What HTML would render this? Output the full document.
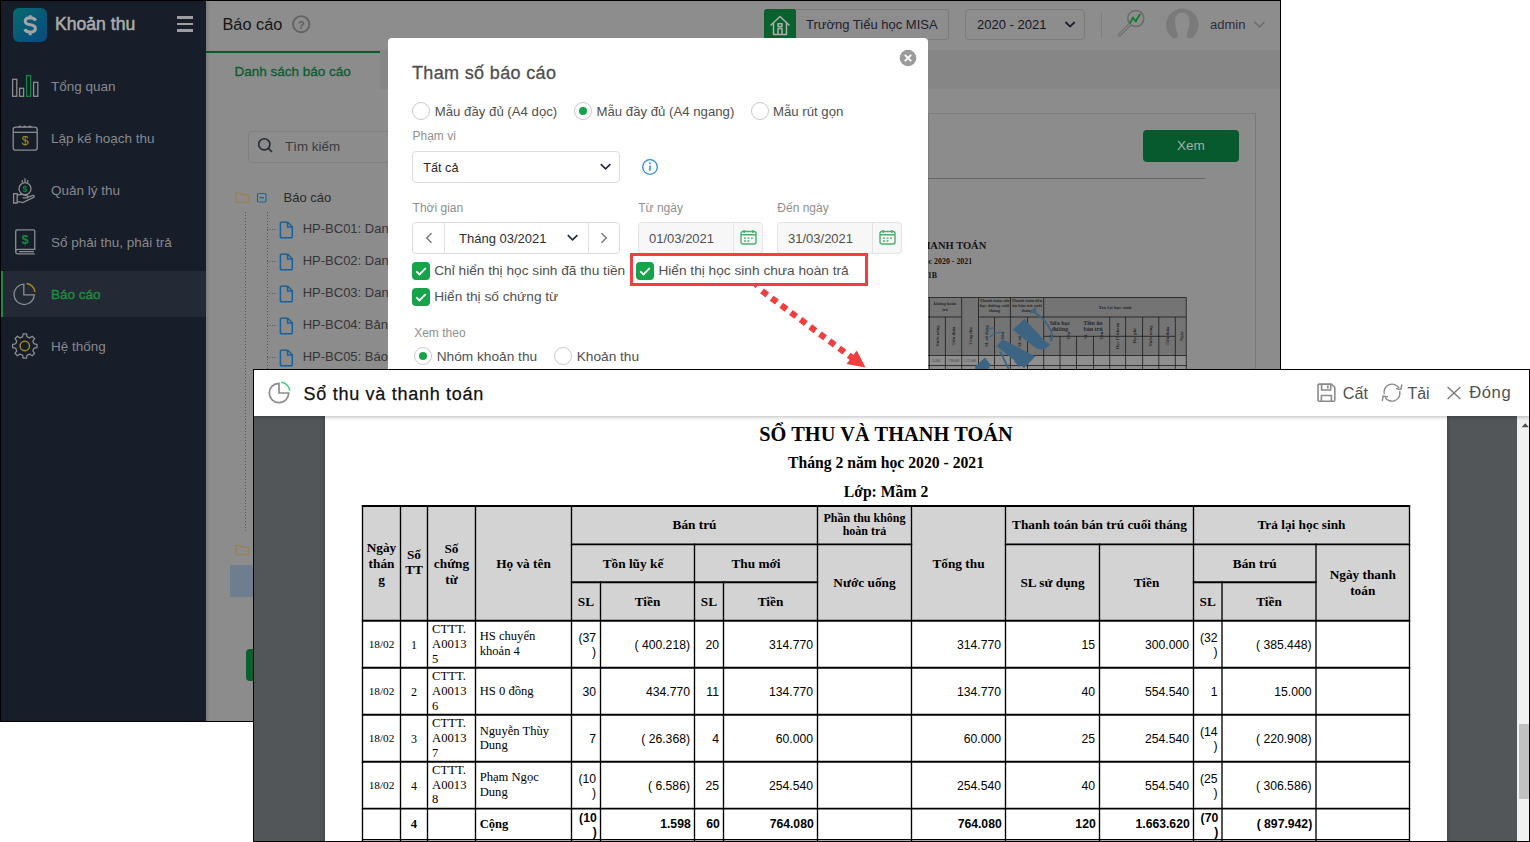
<!DOCTYPE html>
<html><head><meta charset="utf-8">
<style>
*{box-sizing:border-box;margin:0;padding:0}
html,body{width:1530px;height:842px;overflow:hidden;background:#fff;font-family:"Liberation Sans",sans-serif;position:relative}
.a{position:absolute}
.t{position:absolute;white-space:nowrap}
svg{position:absolute;overflow:visible}
</style></head><body>

<div class="a" style="left:0px;top:0px;width:1281px;height:722px;background:#8c8c8c;border:1px solid #000"></div>
<div class="a" style="left:1px;top:1px;width:205px;height:720px;background:#171d29"></div>
<div class="a" style="left:13px;top:8px;width:34px;height:34px;border-radius:6px;background:linear-gradient(135deg,#066d6e 0%,#08567a 60%,#0a4a80 100%)"></div>
<svg style="left:13px;top:8px" width="34" height="34" viewBox="0 0 34 34"><path d="M22.6 12.6c-.7-1.7-2.5-2.8-5.4-2.8c-3 0-5 1.4-5 3.5c0 2.3 2.1 3 5.1 3.5c3.1.5 5.1 1.3 5.1 3.7c0 2.1-2.1 3.5-5.2 3.5c-2.8 0-4.7-1.1-5.4-2.9M17.2 7.2v4.2M17.2 23.2v4" fill="none" stroke="#a6a6a6" stroke-width="3"/></svg>
<div class="t" style="left:55px;top:13.94px;font-size:17.6px;line-height:21.12px;color:#aaaaaa;font-weight:normal;font-family:'Liberation Sans',sans-serif;-webkit-text-stroke:0.55px #aaaaaa;">Khoản thu</div>
<div class="a" style="left:177px;top:15.8px;width:16px;height:2.8px;background:#9e9e9e"></div>
<div class="a" style="left:177px;top:22.6px;width:16px;height:2.8px;background:#9e9e9e"></div>
<div class="a" style="left:177px;top:29.3px;width:16px;height:2.8px;background:#9e9e9e"></div>
<div class="t" style="left:51px;top:78.72px;font-size:13.5px;line-height:16.2px;color:#87898e;font-weight:normal;font-family:'Liberation Sans',sans-serif;">Tổng quan</div>
<div class="t" style="left:51px;top:130.72px;font-size:13.5px;line-height:16.2px;color:#87898e;font-weight:normal;font-family:'Liberation Sans',sans-serif;">Lập kế hoạch thu</div>
<div class="t" style="left:51px;top:182.72px;font-size:13.5px;line-height:16.2px;color:#87898e;font-weight:normal;font-family:'Liberation Sans',sans-serif;">Quản lý thu</div>
<div class="t" style="left:51px;top:234.72px;font-size:13.5px;line-height:16.2px;color:#87898e;font-weight:normal;font-family:'Liberation Sans',sans-serif;">Sổ phải thu, phải trả</div>
<div class="a" style="left:1px;top:271px;width:205px;height:46px;background:#232a36"></div>
<div class="a" style="left:1px;top:271px;width:2px;height:46px;background:#1d8c3f"></div>
<div class="t" style="left:51px;top:286.72px;font-size:13.5px;line-height:16.2px;color:#1e8a3e;font-weight:normal;font-family:'Liberation Sans',sans-serif;-webkit-text-stroke:0.45px #1e8a3e;">Báo cáo</div>
<div class="t" style="left:51px;top:338.72px;font-size:13.5px;line-height:16.2px;color:#87898e;font-weight:normal;font-family:'Liberation Sans',sans-serif;">Hệ thống</div>
<svg style="left:0;top:0" width="60" height="400">
<g fill="none" stroke="#8b8d91" stroke-width="1.3">
<rect x="12.6" y="79.3" width="4.2" height="17"/>
<rect x="19.6" y="88.3" width="4" height="8"/>
<rect x="33.6" y="82.3" width="4.2" height="14"/>
<rect x="13.2" y="127.2" width="24" height="23" rx="2.5"/>
<path d="M13.2 132.3h24"/>
<path d="M18.5 127.5a1.3 1.3 0 1 1 2.6 0M23.5 127.5a1.3 1.3 0 1 1 2.6 0M28.5 127.5a1.3 1.3 0 1 1 2.6 0"/>
<circle cx="25" cy="188.7" r="6"/>
<path d="M25 178.3v3.8M22.3 180v2.6M27.7 180v2.6"/>
<path d="M13.6 193.6h3.6v9.4h-3.6z"/>
<path d="M17.2 195l4.8-.6l5.4 1.4c1.2.3 1 2-.3 2h-4.4"/>
<path d="M17.2 201.3l5.6 1.3l10.8-5.2c1.3-.6.6-2.4-.8-2l-6 2.2"/>
<path d="M17 229.8h16.6c.8 0 1.2.4 1.2 1.2v18.3h-16.8c-1.3 0-2.3 1-2.3 2.3s1 2.3 2.3 2.3h16.8M15.7 251.6v-20.2c0-.8.6-1.4 1.3-1.4"/>
<path d="M19 251.6h15"/>
<path d="M23.8 284.2a10.2 10.2 0 1 0 10.6 10.6h-10.6z"/>
</g>
<rect x="26.6" y="75.6" width="4" height="20.7" fill="none" stroke="#13853d" stroke-width="1.3"/>
<path d="M26.6 283.5a10.6 10.6 0 0 1 8.5 8.4" fill="none" stroke="#a4872a" stroke-width="1.5"/>
<g fill="none" stroke="#a4872a" stroke-width="1.5"><circle cx="24.8" cy="346" r="4.7"/></g>
<path id="gear" d="" fill="none" stroke="#8b8d91" stroke-width="1.3"/>
<text x="25.2" y="145.2" font-size="13" font-family="Liberation Sans" fill="#a4872a" text-anchor="middle">$</text>
<text x="25" y="192" font-size="9" font-family="Liberation Sans" fill="#13853d" text-anchor="middle" font-weight="bold">$</text>
<text x="25" y="243.6" font-size="13" font-family="Liberation Sans" fill="#13853d" text-anchor="middle" font-weight="bold">$</text>
<path d="M34.27 343.88L36.98 344.28L36.98 347.72L34.27 348.12L33.67 348.80L33.39 349.56L33.05 350.29L32.99 351.20L34.63 353.40L32.20 355.83L30.00 354.19L29.09 354.25L28.36 354.59L27.60 354.87L26.92 355.47L26.52 358.18L23.08 358.18L22.68 355.47L22.00 354.87L21.24 354.59L20.51 354.25L19.60 354.19L17.40 355.83L14.97 353.40L16.61 351.20L16.55 350.29L16.21 349.56L15.93 348.80L15.33 348.12L12.62 347.72L12.62 344.28L15.33 343.88L15.93 343.20L16.21 342.44L16.55 341.71L16.61 340.80L14.97 338.60L17.40 336.17L19.60 337.81L20.51 337.75L21.24 337.41L22.00 337.13L22.68 336.53L23.08 333.82L26.52 333.82L26.92 336.53L27.60 337.13L28.36 337.41L29.09 337.75L30.00 337.81L32.20 336.17L34.63 338.60L32.99 340.80L33.05 341.71L33.39 342.44L33.67 343.20Z" fill="none" stroke="#8b8d91" stroke-width="1.3" stroke-linejoin="round"/>
</svg>
<div class="a" style="left:206px;top:1px;width:1074px;height:50px;background:#8d8d8d;border-bottom:1px solid #868686"></div>
<div class="t" style="left:222.5px;top:14.57px;font-size:16.3px;line-height:19.56px;color:#151515;font-weight:normal;font-family:'Liberation Sans',sans-serif;">Báo cáo</div>
<svg style="left:292px;top:15px" width="20" height="20"><circle cx="9.2" cy="9.2" r="8.1" fill="none" stroke="#636363" stroke-width="1.9"/><text x="9.2" y="13.5" font-size="11.5" font-family="Liberation Sans" font-weight="bold" fill="#606060" text-anchor="middle">?</text></svg>
<div class="a" style="left:206px;top:51px;width:1074px;height:38px;background:#868686"></div>
<div class="a" style="left:206px;top:51px;width:174px;height:38px;background:#8c8c8c"></div>
<div class="a" style="left:206px;top:1px;width:4px;height:720px;background:linear-gradient(90deg,rgba(0,0,0,.12),rgba(0,0,0,0))"></div>
<div class="a" style="left:206px;top:50.5px;width:174px;height:2px;background:#0c5a2a"></div>
<div class="t" style="left:234.5px;top:63.52px;font-size:13.5px;line-height:16.2px;color:#0f5c34;font-weight:normal;font-family:'Liberation Sans',sans-serif;-webkit-text-stroke:0.35px #0f5c34;">Danh sách báo cáo</div>
<div class="a" style="left:764px;top:9px;width:32px;height:31px;background:#08612f;border-radius:3px 0 0 3px"></div>
<svg style="left:764px;top:9px" width="32" height="31"><path d="M6.5 16.5L16 7.5l9.5 9M9.5 14v11.5h13V14M14 25.5v-6h4v6M14 14.8h4v2.6h-4z" fill="none" stroke="#a9b0ab" stroke-width="1.5" stroke-linejoin="round"/></svg>
<div class="a" style="left:795px;top:9px;width:154px;height:31px;border:1px solid #7b7b7b;border-left:none;border-radius:0 4px 4px 0"></div>
<div class="t" style="left:806px;top:17.20px;font-size:13px;line-height:15.6px;color:#1f2030;font-weight:normal;font-family:'Liberation Sans',sans-serif;">Trường Tiểu học MISA</div>
<div class="a" style="left:965px;top:9px;width:120px;height:31px;border:1px solid #7b7b7b;border-radius:4px"></div>
<div class="t" style="left:977px;top:17.20px;font-size:13px;line-height:15.6px;color:#161622;font-weight:normal;font-family:'Liberation Sans',sans-serif;">2020 - 2021</div>
<svg style="left:1064px;top:20px" width="14" height="10"><path d="M1.5 2l4.6 4.6l4.6-4.6" fill="none" stroke="#1c1f33" stroke-width="1.8"/></svg>
<div class="a" style="left:1101px;top:12px;width:1px;height:26px;background:#7e7e7e"></div>
<svg style="left:1116px;top:8px" width="32" height="30">
<circle cx="19.8" cy="10.5" r="8" fill="none" stroke="#6a6a6a" stroke-width="1.5"/>
<path d="M14 16.5l-10.5 10.3" stroke="#6a6a6a" stroke-width="3.2" stroke-linecap="round"/>
<path d="M14 16.5l-10.5 10.3" stroke="#8c8c8c" stroke-width="1.2" stroke-linecap="round"/>
<path d="M13.8 15.2L17 10L19.8 13L24.2 6" fill="none" stroke="#137a36" stroke-width="1.8"/><circle cx="17" cy="10" r="1.2" fill="#137a36"/><circle cx="19.8" cy="13" r="1.2" fill="#137a36"/>
</svg>
<svg style="left:0;top:0" width="1280" height="50"><path d="M1172 37.5A16.3 16.3 0 1 1 1192.6 37.5A3.6 3.6 0 0 1 1186.6 34.6C1188.6 30 1189.5 26 1189.5 21C1189.5 15.5 1186.5 12.5 1182.3 12.5C1178 12.5 1175 15.5 1175 21C1175 26 1176 30 1178 34.6A3.6 3.6 0 0 1 1172 37.5Z" fill="#7a7a7a"/></svg>
<div class="t" style="left:1210px;top:16.50px;font-size:13px;line-height:15.6px;color:#2c2e3c;font-weight:normal;font-family:'Liberation Sans',sans-serif;">admin</div>
<svg style="left:1253px;top:20px" width="14" height="10"><path d="M1.5 2l5 5l5-5" fill="none" stroke="#666" stroke-width="1.2"/></svg>
<div class="a" style="left:248px;top:131px;width:160px;height:32px;border:1px solid #808080;border-radius:4px"></div>
<svg style="left:257px;top:137px" width="18" height="18"><circle cx="7.3" cy="7.3" r="5.6" fill="none" stroke="#262a35" stroke-width="1.6"/><path d="M11.4 11.4l3.6 3.6" stroke="#262a35" stroke-width="1.7"/></svg>
<div class="t" style="left:285px;top:138.82px;font-size:13.4px;line-height:16.08px;color:#3b3a40;font-weight:normal;font-family:'Liberation Sans',sans-serif;">Tìm kiếm</div>
<svg style="left:230px;top:185px" width="160" height="550">
<path d="M6 8h4.5l1.5 1.7h6c.5 0 .8.3.8.8v6.7h-12.8z" fill="none" stroke="#9c7f45" stroke-width="1.1"/>
<rect x="27.5" y="8.5" width="8.5" height="8.5" rx="1" fill="none" stroke="#1d64a0" stroke-width="1.1"/>
<path d="M29.5 12.75h4.5" stroke="#1c68a0" stroke-width="1.3"/>
<path d="M15.5 27v320M37.5 27v320" stroke="#555" stroke-width="1" stroke-dasharray="1 2"/>
<path d="M6 360.5h4.5l1.5 1.7h6c.5 0 .8.3.8.8v6.7h-12.8z" fill="none" stroke="#9c7f45" stroke-width="1.1"/>
</svg>
<div class="t" style="left:283.5px;top:190.00px;font-size:13px;line-height:15.6px;color:#2a2a2a;font-weight:normal;font-family:'Liberation Sans',sans-serif;">Báo cáo</div>
<svg style="left:236px;top:219px" width="60" height="20"><path d="M31 10.5h10" stroke="#555" stroke-width="1" stroke-dasharray="1 1.5"/><path d="M45.3 3.2h6.5l4.5 4.5v10.2c0 .5-.4.9-.9.9h-10.1c-.5 0-.9-.4-.9-.9v-13.8c0-.5.4-.9.9-.9zM51.5 3.2v4.8h4.8" fill="none" stroke="#1a6199" stroke-width="1.5"/></svg>
<div class="t" style="left:302.7px;top:221.40px;font-size:13px;line-height:15.6px;color:#353535;font-weight:normal;font-family:'Liberation Sans',sans-serif;">HP-BC01: Danh sách</div>
<svg style="left:236px;top:251px" width="60" height="20"><path d="M31 10.5h10" stroke="#555" stroke-width="1" stroke-dasharray="1 1.5"/><path d="M45.3 3.2h6.5l4.5 4.5v10.2c0 .5-.4.9-.9.9h-10.1c-.5 0-.9-.4-.9-.9v-13.8c0-.5.4-.9.9-.9zM51.5 3.2v4.8h4.8" fill="none" stroke="#1a6199" stroke-width="1.5"/></svg>
<div class="t" style="left:302.7px;top:253.40px;font-size:13px;line-height:15.6px;color:#353535;font-weight:normal;font-family:'Liberation Sans',sans-serif;">HP-BC02: Danh sách</div>
<svg style="left:236px;top:283px" width="60" height="20"><path d="M31 10.5h10" stroke="#555" stroke-width="1" stroke-dasharray="1 1.5"/><path d="M45.3 3.2h6.5l4.5 4.5v10.2c0 .5-.4.9-.9.9h-10.1c-.5 0-.9-.4-.9-.9v-13.8c0-.5.4-.9.9-.9zM51.5 3.2v4.8h4.8" fill="none" stroke="#1a6199" stroke-width="1.5"/></svg>
<div class="t" style="left:302.7px;top:285.40px;font-size:13px;line-height:15.6px;color:#353535;font-weight:normal;font-family:'Liberation Sans',sans-serif;">HP-BC03: Danh sách</div>
<svg style="left:236px;top:315px" width="60" height="20"><path d="M31 10.5h10" stroke="#555" stroke-width="1" stroke-dasharray="1 1.5"/><path d="M45.3 3.2h6.5l4.5 4.5v10.2c0 .5-.4.9-.9.9h-10.1c-.5 0-.9-.4-.9-.9v-13.8c0-.5.4-.9.9-.9zM51.5 3.2v4.8h4.8" fill="none" stroke="#1a6199" stroke-width="1.5"/></svg>
<div class="t" style="left:302.7px;top:317.40px;font-size:13px;line-height:15.6px;color:#353535;font-weight:normal;font-family:'Liberation Sans',sans-serif;">HP-BC04: Bảng kê</div>
<svg style="left:236px;top:347px" width="60" height="20"><path d="M31 10.5h10" stroke="#555" stroke-width="1" stroke-dasharray="1 1.5"/><path d="M45.3 3.2h6.5l4.5 4.5v10.2c0 .5-.4.9-.9.9h-10.1c-.5 0-.9-.4-.9-.9v-13.8c0-.5.4-.9.9-.9zM51.5 3.2v4.8h4.8" fill="none" stroke="#1a6199" stroke-width="1.5"/></svg>
<div class="t" style="left:302.7px;top:349.40px;font-size:13px;line-height:15.6px;color:#353535;font-weight:normal;font-family:'Liberation Sans',sans-serif;">HP-BC05: Báo cáo</div>
<div class="a" style="left:230px;top:565px;width:30px;height:32px;background:#6e7e8e"></div>
<div class="a" style="left:246px;top:649px;width:14px;height:32px;background:#08612f;border-radius:4px"></div>
<div class="a" style="left:928px;top:113px;width:328px;height:620px;border:1px solid #7d7d7d;border-right:1px solid #7a7a7a"></div>
<div class="a" style="left:1143px;top:130px;width:96px;height:32px;background:#075a2d;border-radius:4px"></div>
<div class="t" style="left:1143px;top:138.22px;font-size:13.5px;line-height:16.2px;color:#a3aea6;font-weight:normal;font-family:'Liberation Sans',sans-serif;width:96px;text-align:center;">Xem</div>
<div class="a" style="left:928px;top:177.5px;width:277px;height:1.3px;background:#676767"></div>
<div class="t" style="left:800px;top:240.2px;width:186.3px;text-align:right;font:bold 10.5px/12px 'Liberation Serif',serif;color:#141414">SỔ THU VÀ THANH TOÁN</div>
<div class="t" style="left:800px;top:257.2px;width:172.2px;text-align:right;font:bold 7.9px/9px 'Liberation Serif',serif;color:#141414">Tháng 2 năm học 2020 - 2021</div>
<div class="t" style="left:800px;top:270.7px;width:137px;text-align:right;font:bold 7.9px/9px 'Liberation Serif',serif;color:#141414">Lớp: Mầm 1B</div>
<svg style="left:900px;top:290px" width="300" height="90" viewBox="900 290 300 90"><rect x="920" y="297.5" width="266" height="58" fill="#747474"/><rect x="920" y="355.5" width="266" height="14" fill="#8e8e8e"/><g stroke="#1a1a1a" stroke-width="0.8" fill="none"><path d="M920 297.5H1186.3M920 355.5H1186.3M920 365.5H1186.3M920 317H961.7M978.5 317H1186.3M1043.7 336.3H1175"/><path d="M929.4 297.5V370"/><path d="M961.7 297.5V370"/><path d="M978.5 297.5V370"/><path d="M1010.4 297.5V370"/><path d="M1043.7 297.5V370"/><path d="M1186.3 297.5V370"/><path d="M945.4 317V370"/><path d="M994.5 317V370"/><path d="M1027.5 317V370"/><path d="M1060 336.3V370"/><path d="M1076.5 336.3V370"/><path d="M1093.5 336.3V370"/><path d="M1109.7 317V370"/><path d="M1125.6 317V370"/><path d="M1142.6 317V370"/><path d="M1158.8 317V370"/><path d="M1175.3 317V370"/></g><g fill="#2a2a2a" font-family="Liberation Serif" font-weight="bold" font-size="4.5" text-anchor="middle"><text x="945" y="305">không hoàn</text><text x="945" y="311">trả</text><text x="994.5" y="302">Thanh toán sữa</text><text x="994.5" y="307">học đường cuối</text><text x="994.5" y="312">tháng</text><text x="1027" y="302">Thanh toán tiền</text><text x="1027" y="307">ăn bán trú cuối</text><text x="1027" y="312">tháng</text><text x="1115" y="309" font-size="5">Trả lại học sinh</text><text x="1060" y="325" font-size="6">Sữa học</text><text x="1060" y="331" font-size="6">đường</text><text x="1093" y="325" font-size="6">Tiền ăn</text><text x="1093" y="331" font-size="6">bán trú</text></g><g fill="#2a2a2a" font-family="Liberation Serif" font-weight="bold" font-size="4.5" text-anchor="middle"><text transform="translate(939.0 336) rotate(-90)">Nước uống</text><text transform="translate(955.0 336) rotate(-90)">Tiền thừa</text><text transform="translate(971.5 336) rotate(-90)">Tổng thu</text><text transform="translate(988.0 336) rotate(-90)">SL sử dụng</text><text transform="translate(1004.0 336) rotate(-90)">Tiền</text><text transform="translate(1020.5 336) rotate(-90)">SL sử dụng</text><text transform="translate(1037.0 336) rotate(-90)">Tiền</text><text transform="translate(1053.0 336) rotate(-90)">SL</text><text transform="translate(1069.5 336) rotate(-90)">Tiền</text><text transform="translate(1086.5 336) rotate(-90)">SL</text><text transform="translate(1103.0 336) rotate(-90)">Tiền</text><text transform="translate(1119.0 336) rotate(-90)">Học 15 khoản</text><text transform="translate(1135.5 336) rotate(-90)">Học phí</text><text transform="translate(1152.0 336) rotate(-90)">Nước uống</text><text transform="translate(1168.5 336) rotate(-90)">Tiền thừa</text><text transform="translate(1182.5 336) rotate(-90)">Ngày</text></g><g fill="#3a3a3a" font-size="3" font-family="Liberation Serif"><text x="932" y="362">55.000</text><text x="948" y="362">1700.000</text><text x="964" y="362">1.175.000</text></g><g fill="#3e6483"><path d="M1012.5 329.9L1024.9 318.5L1026.3 321.3L1045.8 341.8C1047.5 343 1049 343.6 1050.5 344.1C1048 347.5 1045 349.4 1042 349.4C1039 349.4 1036.5 348.5 1034.4 347L1014 330.8Z"/><path d="M996.4 346L1003 339.4L1035.3 356.5L1024 367.9Z"/><path d="M1014 361l4-3l5 5l-4 4z"/><path d="M975.5 366L985 357.4L990.7 365L988 370L975 370Z"/></g><path d="M1000.2 351.7L1008.7 369" stroke="#3e6483" stroke-width="1.8"/><path d="M1032 311C1039 315 1045 320 1049 327C1052.5 333 1053.5 337 1050.5 341.3" fill="none" stroke="#3e6483" stroke-width="1.8"/><path d="M1029.5 312.8l6.3-6.2l.8 6.5z" fill="#3e6483"/><path d="M985.9 331C988 329 991 328.5 994.5 327.5M989.7 337.5C992 334 996 332 1004 331.8" fill="none" stroke="#3e6483" stroke-width="1.3"/></svg>
<div class="a" style="left:388px;top:38px;width:540px;height:340px;background:#fff;border-radius:4px"></div>
<svg style="left:899px;top:49px" width="18" height="18"><circle cx="9" cy="9" r="8.3" fill="#9b9b9b"/><path d="M5.8 5.8l6.4 6.4M12.2 5.8l-6.4 6.4" stroke="#fff" stroke-width="1.9"/></svg>
<div class="t" style="left:412px;top:62.86px;font-size:18px;line-height:21.6px;color:#4f4f4f;font-weight:normal;font-family:'Liberation Sans',sans-serif;letter-spacing:0.35px;-webkit-text-stroke:0.3px #4f4f4f;">Tham số báo cáo</div>
<div class="a" style="left:412px;top:102px;width:18px;height:18px;border:1px solid #c9c9c9;border-radius:50%;background:#fff"></div>
<div class="t" style="left:434.8px;top:103.71px;font-size:13.2px;line-height:15.84px;color:#505050;font-weight:normal;font-family:'Liberation Sans',sans-serif;">Mẫu đầy đủ (A4 dọc)</div>
<div class="a" style="left:574px;top:102px;width:18px;height:18px;border:1px solid #c9c9c9;border-radius:50%;background:#fff"></div>
<div class="a" style="left:578.8px;top:106.8px;width:8.4px;height:8.4px;border-radius:50%;background:#17a34a"></div>
<div class="t" style="left:596.5px;top:103.71px;font-size:13.2px;line-height:15.84px;color:#505050;font-weight:normal;font-family:'Liberation Sans',sans-serif;">Mẫu đầy đủ (A4 ngang)</div>
<div class="a" style="left:751px;top:102px;width:18px;height:18px;border:1px solid #c9c9c9;border-radius:50%;background:#fff"></div>
<div class="t" style="left:773px;top:103.71px;font-size:13.2px;line-height:15.84px;color:#505050;font-weight:normal;font-family:'Liberation Sans',sans-serif;">Mẫu rút gọn</div>
<div class="t" style="left:412.5px;top:129.44px;font-size:12px;line-height:14.4px;color:#8f8f8f;font-weight:normal;font-family:'Liberation Sans',sans-serif;">Phạm vi</div>
<div class="a" style="left:412px;top:151px;width:208px;height:32px;border:1px solid #dcdcdc;border-radius:4px"></div>
<div class="t" style="left:423.2px;top:160.58px;font-size:12.7px;line-height:15.24px;color:#262626;font-weight:normal;font-family:'Liberation Sans',sans-serif;">Tất cả</div>
<svg style="left:599px;top:162px" width="14" height="10"><path d="M1.8 2.2l4.8 4.6l4.8-4.6" fill="none" stroke="#242943" stroke-width="1.7"/></svg>
<svg style="left:641px;top:158px" width="18" height="18"><circle cx="9" cy="9" r="7.3" fill="none" stroke="#2d8ad8" stroke-width="1.3"/><path d="M9 7.6v5.2" stroke="#2d8ad8" stroke-width="1.5"/><circle cx="9" cy="5.3" r=".95" fill="#2d8ad8"/></svg>
<div class="t" style="left:412.6px;top:201.44px;font-size:12px;line-height:14.4px;color:#8f8f8f;font-weight:normal;font-family:'Liberation Sans',sans-serif;">Thời gian</div>
<div class="t" style="left:638.2px;top:201.44px;font-size:12px;line-height:14.4px;color:#8f8f8f;font-weight:normal;font-family:'Liberation Sans',sans-serif;">Từ ngày</div>
<div class="t" style="left:777.3px;top:201.44px;font-size:12px;line-height:14.4px;color:#8f8f8f;font-weight:normal;font-family:'Liberation Sans',sans-serif;">Đến ngày</div>
<div class="a" style="left:412px;top:222px;width:208px;height:32px;border:1px solid #dcdcdc;border-radius:4px"></div>
<div class="a" style="left:444px;top:223px;width:1px;height:30px;background:#e2e2e2"></div>
<div class="a" style="left:587.5px;top:223px;width:1px;height:30px;background:#e2e2e2"></div>
<svg style="left:422px;top:230px" width="14" height="16"><path d="M9.5 3.2l-4.8 4.8l4.8 4.8" fill="none" stroke="#777" stroke-width="1.4"/></svg>
<svg style="left:597px;top:230px" width="14" height="16"><path d="M4.5 3.2l4.8 4.8l-4.8 4.8" fill="none" stroke="#777" stroke-width="1.4"/></svg>
<div class="t" style="left:459px;top:230.60px;font-size:13px;line-height:15.6px;color:#2e2e2e;font-weight:normal;font-family:'Liberation Sans',sans-serif;">Tháng 03/2021</div>
<svg style="left:566px;top:233px" width="14" height="10"><path d="M1.8 2.2l4.8 4.6l4.8-4.6" fill="none" stroke="#242943" stroke-width="1.7"/></svg>
<div class="a" style="left:638px;top:222px;width:125px;height:32px;border:1px solid #e3e3e3;border-radius:4px;background:#f7f7f7"></div>
<div class="a" style="left:732.5px;top:223px;width:1px;height:30px;background:#e3e3e3"></div>
<div class="t" style="left:649px;top:230.60px;font-size:13px;line-height:15.6px;color:#505050;font-weight:normal;font-family:'Liberation Sans',sans-serif;">01/03/2021</div>
<svg style="left:739.5px;top:230px" width="18" height="16"><rect x="1" y="1.5" width="15" height="12.5" rx="2" fill="none" stroke="#47b06e" stroke-width="1.4"/><path d="M1 4.8h15M4.2 0v3M12.8 0v3" stroke="#47b06e" stroke-width="1.4"/><path d="M4 8.2h2M7.5 8.2h2M11 8.2h2M4 11h2M7.5 11h2" stroke="#47b06e" stroke-width="1.3"/></svg>
<div class="a" style="left:777px;top:222px;width:125px;height:32px;border:1px solid #e3e3e3;border-radius:4px;background:#f7f7f7"></div>
<div class="a" style="left:871.5px;top:223px;width:1px;height:30px;background:#e3e3e3"></div>
<div class="t" style="left:788px;top:230.60px;font-size:13px;line-height:15.6px;color:#505050;font-weight:normal;font-family:'Liberation Sans',sans-serif;">31/03/2021</div>
<svg style="left:878.5px;top:230px" width="18" height="16"><rect x="1" y="1.5" width="15" height="12.5" rx="2" fill="none" stroke="#47b06e" stroke-width="1.4"/><path d="M1 4.8h15M4.2 0v3M12.8 0v3" stroke="#47b06e" stroke-width="1.4"/><path d="M4 8.2h2M7.5 8.2h2M11 8.2h2M4 11h2M7.5 11h2" stroke="#47b06e" stroke-width="1.3"/></svg>
<div class="a" style="left:412px;top:262px;width:18px;height:18px;border-radius:4px;background:#17a34a"></div>
<svg style="left:412px;top:262px" width="18" height="18"><path d="M4.3 9.3l3.2 3.1l6.2-6.2" fill="none" stroke="#fff" stroke-width="1.8"/></svg>
<div class="t" style="left:434.2px;top:263.43px;font-size:13.7px;line-height:16.44px;color:#505050;font-weight:normal;font-family:'Liberation Sans',sans-serif;">Chỉ hiển thị học sinh đã thu tiền</div>
<div class="a" style="left:636.4px;top:262px;width:18px;height:18px;border-radius:4px;background:#17a34a"></div>
<svg style="left:636.4px;top:262px" width="18" height="18"><path d="M4.3 9.3l3.2 3.1l6.2-6.2" fill="none" stroke="#fff" stroke-width="1.8"/></svg>
<div class="t" style="left:658.4px;top:263.43px;font-size:13.7px;line-height:16.44px;color:#505050;font-weight:normal;font-family:'Liberation Sans',sans-serif;">Hiển thị học sinh chưa hoàn trả</div>
<div class="a" style="left:412px;top:288px;width:18px;height:18px;border-radius:4px;background:#17a34a"></div>
<svg style="left:412px;top:288px" width="18" height="18"><path d="M4.3 9.3l3.2 3.1l6.2-6.2" fill="none" stroke="#fff" stroke-width="1.8"/></svg>
<div class="t" style="left:434.2px;top:289.43px;font-size:13.7px;line-height:16.44px;color:#505050;font-weight:normal;font-family:'Liberation Sans',sans-serif;">Hiển thị số chứng từ</div>
<div class="t" style="left:414.2px;top:325.64px;font-size:12px;line-height:14.4px;color:#8f8f8f;font-weight:normal;font-family:'Liberation Sans',sans-serif;">Xem theo</div>
<div class="a" style="left:414px;top:347px;width:18px;height:18px;border:1px solid #c9c9c9;border-radius:50%;background:#fff"></div>
<div class="a" style="left:418.8px;top:351.8px;width:8.4px;height:8.4px;border-radius:50%;background:#17a34a"></div>
<div class="t" style="left:436.7px;top:348.83px;font-size:13.7px;line-height:16.44px;color:#505050;font-weight:normal;font-family:'Liberation Sans',sans-serif;">Nhóm khoản thu</div>
<div class="a" style="left:554px;top:347px;width:18px;height:18px;border:1px solid #c9c9c9;border-radius:50%;background:#fff"></div>
<div class="t" style="left:576.7px;top:348.83px;font-size:13.7px;line-height:16.44px;color:#505050;font-weight:normal;font-family:'Liberation Sans',sans-serif;">Khoản thu</div>
<div class="a" style="left:630px;top:253px;width:238px;height:33px;border:3px solid #f23e3e"></div>
<svg style="left:0;top:0" width="1530" height="842">
<path d="M752.5 285l3 3.2l3-3.2z" fill="#f23e3e"/>
<line x1="762" y1="291" x2="853" y2="358.5" stroke="#f23e3e" stroke-width="6.2" stroke-dasharray="6.6 5.4"/>
<path d="M865.5 367.5L846.5 364L856.8 350.5Z" fill="#f23e3e"/>
</svg>
<div class="a" style="left:253px;top:369px;width:1277px;height:473px;border:1px solid #000;background:#525659;overflow:hidden;z-index:5">
<div class="a" style="left:-254px;top:-370px;width:1530px;height:842px">
<div class="a" style="left:325px;top:410px;width:1122px;height:440px;background:#fff;box-shadow:0 0 4px rgba(0,0,0,.35)"></div>
<div class="a" style="left:1517px;top:416px;width:13px;height:430px;background:#f1f1f1"></div>
<svg style="left:1517px;top:416px" width="13" height="14"><path d="M4.5 11.3L8.3 7.2L12.1 11.3Z" fill="#505050"/></svg>
<div class="a" style="left:1519px;top:724px;width:10px;height:75px;background:#c1c1c1"></div>
<div class="a" style="left:254px;top:370px;width:1276px;height:46px;background:#fff;box-shadow:0 1px 4px rgba(0,0,0,.28)"></div>
<svg style="left:266px;top:380px" width="26" height="26"><path d="M13 3.3A9.7 9.7 0 1 0 22.7 13H13Z" fill="none" stroke="#8c8c8c" stroke-width="1.7"/><path d="M15.2 2.2A10 10 0 0 1 23.8 10.7" fill="none" stroke="#2ecc71" stroke-width="1.6"/></svg>
<div class="t" style="left:303.5px;top:383.56px;font-size:18px;line-height:21.6px;color:#101010;font-weight:normal;font-family:'Liberation Sans',sans-serif;letter-spacing:0.72px;-webkit-text-stroke:0.25px #101010;">Sổ thu và thanh toán</div>
<svg style="left:0;top:0" width="1530" height="842"><g fill="none" stroke="#8a8a8a" stroke-width="1.6"><path d="M1319.2 384.1H1331.4L1334.8 387.5V399.9C1334.8 400.6 1334.3 401.2 1333.6 401.2H1319.2C1318.5 401.2 1318 400.6 1318 399.9V385.3C1318 384.6 1318.5 384.1 1319.2 384.1Z"/><path d="M1321.6 384.3V390H1330.7V384.3M1327.8 385.6V388.5M1321.4 401V395.5H1331.4V401"/></g><g fill="none" stroke="#888" stroke-width="1.4"><path d="M1384.3 394.2A8 8 0 0 1 1399 388.2M1399.7 391.2A8 8 0 0 1 1385.1 397.3"/><path d="M1401.8 384.5L1400.9 389.4L1396 388.6M1382.3 401L1383.1 396.1L1388 396.9"/></g><path d="M1447.6 387.1L1460.4 398.9M1460.4 387.1L1447.6 398.9" stroke="#777" stroke-width="1.35"/></svg>
<div class="t" style="left:1342.7px;top:383.77px;font-size:16.2px;line-height:19.44px;color:#505050;font-weight:normal;font-family:'Liberation Sans',sans-serif;">Cất</div>
<div class="t" style="left:1407.4px;top:383.96px;font-size:16px;line-height:19.2px;color:#505050;font-weight:normal;font-family:'Liberation Sans',sans-serif;">Tải</div>
<div class="t" style="left:1469.2px;top:383.39px;font-size:16.6px;line-height:19.92px;color:#505050;font-weight:normal;font-family:'Liberation Sans',sans-serif;letter-spacing:0.6px;">Đóng</div>
<div class="t" style="left:325px;top:422.37px;font-size:20.3px;line-height:24.36px;color:#000;font-weight:bold;font-family:'Liberation Serif',serif;width:1122px;text-align:center;letter-spacing:0.1px;">SỔ THU VÀ THANH TOÁN</div>
<div class="t" style="left:325px;top:454.28px;font-size:15.7px;line-height:18.84px;color:#000;font-weight:bold;font-family:'Liberation Serif',serif;width:1122px;text-align:center;">Tháng 2 năm học 2020 - 2021</div>
<div class="t" style="left:325px;top:482.68px;font-size:15.7px;line-height:18.84px;color:#000;font-weight:bold;font-family:'Liberation Serif',serif;width:1122px;text-align:center;">Lớp: Mầm 2</div>
<div class="a" style="left:362.5px;top:506px;width:1047.0px;height:114.70000000000005px;background:#d3d3d3"></div>
<div class="a" style="left:362.5px;top:506.5px;width:38.0px;height:114.70000000000005px;display:flex;align-items:center;justify-content:center;text-align:center;font-family:'Liberation Serif',serif;font-weight:bold;font-size:13.3px;line-height:16px;padding-left:0px;padding-right:0px;color:#000;"><div>Ngày<br>thán<br>g</div></div>
<div class="a" style="left:400.5px;top:505.6px;width:27.0px;height:114.70000000000005px;display:flex;align-items:center;justify-content:center;text-align:center;font-family:'Liberation Serif',serif;font-weight:bold;font-size:13.3px;line-height:14.8px;padding-left:0px;padding-right:0px;color:#000;"><div>Số<br>TT</div></div>
<div class="a" style="left:427.5px;top:506.5px;width:48.0px;height:114.70000000000005px;display:flex;align-items:center;justify-content:center;text-align:center;font-family:'Liberation Serif',serif;font-weight:bold;font-size:13.3px;line-height:15.4px;padding-left:0px;padding-right:0px;color:#000;"><div>Số<br>chứng<br>từ</div></div>
<div class="a" style="left:475.5px;top:506.5px;width:96.0px;height:114.70000000000005px;display:flex;align-items:center;justify-content:center;text-align:center;font-family:'Liberation Serif',serif;font-weight:bold;font-size:13.3px;line-height:16px;padding-left:0px;padding-right:0px;color:#000;"><div>Họ và tên</div></div>
<div class="a" style="left:571.5px;top:506px;width:246.0px;height:38.39999999999998px;display:flex;align-items:center;justify-content:center;text-align:center;font-family:'Liberation Serif',serif;font-weight:bold;font-size:13.3px;line-height:16px;padding-left:0px;padding-right:0px;color:#000;"><div>Bán trú</div></div>
<div class="a" style="left:817.5px;top:506px;width:94.0px;height:38.39999999999998px;display:flex;align-items:center;justify-content:center;text-align:center;font-family:'Liberation Serif',serif;font-weight:bold;font-size:12px;line-height:13px;padding-left:0px;padding-right:0px;color:#000;"><div>Phần thu không<br>hoàn trả</div></div>
<div class="a" style="left:911.5px;top:506.5px;width:94.0px;height:114.70000000000005px;display:flex;align-items:center;justify-content:center;text-align:center;font-family:'Liberation Serif',serif;font-weight:bold;font-size:13.3px;line-height:16px;padding-left:0px;padding-right:0px;color:#000;"><div>Tổng thu</div></div>
<div class="a" style="left:1005.5px;top:506px;width:188.0px;height:38.39999999999998px;display:flex;align-items:center;justify-content:center;text-align:center;font-family:'Liberation Serif',serif;font-weight:bold;font-size:13.3px;line-height:16px;padding-left:0px;padding-right:0px;color:#000;"><div>Thanh toán bán trú cuối tháng</div></div>
<div class="a" style="left:1193.5px;top:506px;width:216.0px;height:38.39999999999998px;display:flex;align-items:center;justify-content:center;text-align:center;font-family:'Liberation Serif',serif;font-weight:bold;font-size:13.3px;line-height:16px;padding-left:0px;padding-right:0px;color:#000;"><div>Trả lại học sinh</div></div>
<div class="a" style="left:571.5px;top:545.4px;width:123.0px;height:37.89999999999998px;display:flex;align-items:center;justify-content:center;text-align:center;font-family:'Liberation Serif',serif;font-weight:bold;font-size:13.3px;line-height:16px;padding-left:0px;padding-right:0px;color:#000;"><div>Tồn lũy kế</div></div>
<div class="a" style="left:694.5px;top:545.4px;width:123.0px;height:37.89999999999998px;display:flex;align-items:center;justify-content:center;text-align:center;font-family:'Liberation Serif',serif;font-weight:bold;font-size:13.3px;line-height:16px;padding-left:0px;padding-right:0px;color:#000;"><div>Thu mới</div></div>
<div class="a" style="left:817.5px;top:544.6px;width:94.0px;height:76.30000000000007px;display:flex;align-items:center;justify-content:center;text-align:center;font-family:'Liberation Serif',serif;font-weight:bold;font-size:13.3px;line-height:16px;padding-left:0px;padding-right:0px;color:#000;"><div>Nước uống</div></div>
<div class="a" style="left:1005.5px;top:544.6px;width:94.0px;height:76.30000000000007px;display:flex;align-items:center;justify-content:center;text-align:center;font-family:'Liberation Serif',serif;font-weight:bold;font-size:13.3px;line-height:16px;padding-left:0px;padding-right:0px;color:#000;"><div>SL sử dụng</div></div>
<div class="a" style="left:1099.5px;top:544.6px;width:94.0px;height:76.30000000000007px;display:flex;align-items:center;justify-content:center;text-align:center;font-family:'Liberation Serif',serif;font-weight:bold;font-size:13.3px;line-height:16px;padding-left:0px;padding-right:0px;color:#000;"><div>Tiền</div></div>
<div class="a" style="left:1193.5px;top:545.4px;width:122.5px;height:37.89999999999998px;display:flex;align-items:center;justify-content:center;text-align:center;font-family:'Liberation Serif',serif;font-weight:bold;font-size:13.3px;line-height:16px;padding-left:0px;padding-right:0px;color:#000;"><div>Bán trú</div></div>
<div class="a" style="left:1316px;top:544.6px;width:93.5px;height:76.30000000000007px;display:flex;align-items:center;justify-content:center;text-align:center;font-family:'Liberation Serif',serif;font-weight:bold;font-size:13.3px;line-height:16px;padding-left:0px;padding-right:0px;color:#000;"><div>Ngày thanh<br>toán</div></div>
<div class="a" style="left:571.5px;top:583.3px;width:29.0px;height:38.40000000000009px;display:flex;align-items:center;justify-content:center;text-align:center;font-family:'Liberation Serif',serif;font-weight:bold;font-size:13.3px;line-height:16px;padding-left:0px;padding-right:0px;color:#000;"><div>SL</div></div>
<div class="a" style="left:600.5px;top:583.3px;width:94.0px;height:38.40000000000009px;display:flex;align-items:center;justify-content:center;text-align:center;font-family:'Liberation Serif',serif;font-weight:bold;font-size:13.3px;line-height:16px;padding-left:0px;padding-right:0px;color:#000;"><div>Tiền</div></div>
<div class="a" style="left:694.5px;top:583.3px;width:29.0px;height:38.40000000000009px;display:flex;align-items:center;justify-content:center;text-align:center;font-family:'Liberation Serif',serif;font-weight:bold;font-size:13.3px;line-height:16px;padding-left:0px;padding-right:0px;color:#000;"><div>SL</div></div>
<div class="a" style="left:723.5px;top:583.3px;width:94.0px;height:38.40000000000009px;display:flex;align-items:center;justify-content:center;text-align:center;font-family:'Liberation Serif',serif;font-weight:bold;font-size:13.3px;line-height:16px;padding-left:0px;padding-right:0px;color:#000;"><div>Tiền</div></div>
<div class="a" style="left:1193.5px;top:583.3px;width:28.5px;height:38.40000000000009px;display:flex;align-items:center;justify-content:center;text-align:center;font-family:'Liberation Serif',serif;font-weight:bold;font-size:13.3px;line-height:16px;padding-left:0px;padding-right:0px;color:#000;"><div>SL</div></div>
<div class="a" style="left:1222px;top:583.3px;width:94px;height:38.40000000000009px;display:flex;align-items:center;justify-content:center;text-align:center;font-family:'Liberation Serif',serif;font-weight:bold;font-size:13.3px;line-height:16px;padding-left:0px;padding-right:0px;color:#000;"><div>Tiền</div></div>
<div class="a" style="left:362.5px;top:620.7px;width:38.0px;height:47.09999999999991px;display:flex;align-items:center;justify-content:center;text-align:center;font-family:'Liberation Serif',serif;font-weight:normal;font-size:11.3px;line-height:14px;padding-left:0px;padding-right:0px;color:#000;"><div>18/02</div></div>
<div class="a" style="left:400.5px;top:621.2px;width:27.0px;height:47.09999999999991px;display:flex;align-items:center;justify-content:center;text-align:center;font-family:'Liberation Serif',serif;font-weight:normal;font-size:12px;line-height:14px;padding-left:0px;padding-right:0px;color:#000;"><div>1</div></div>
<div class="a" style="left:427.5px;top:620.7px;width:48.0px;height:47.09999999999991px;display:flex;align-items:center;justify-content:flex-start;text-align:left;font-family:'Liberation Serif',serif;font-weight:normal;font-size:12.6px;line-height:14.6px;padding-left:4.5px;padding-right:0px;color:#000;letter-spacing:0.05px;"><div>CTTT.<br>A0013<br>5</div></div>
<div class="a" style="left:475.5px;top:620.7px;width:96.0px;height:47.09999999999991px;display:flex;align-items:center;justify-content:flex-start;text-align:left;font-family:'Liberation Serif',serif;font-weight:normal;font-size:12.6px;line-height:14.8px;padding-left:4.2px;padding-right:0px;color:#000;"><div>HS chuyển<br>khoản 4</div></div>
<div class="a" style="left:571.5px;top:621.7px;width:29.0px;height:47.09999999999991px;display:flex;align-items:center;justify-content:flex-end;text-align:right;font-family:'Liberation Sans',sans-serif;font-weight:normal;font-size:12.2px;line-height:14px;padding-left:0px;padding-right:4.5px;color:#000;"><div>(37<br>)</div></div>
<div class="a" style="left:600.5px;top:621.7px;width:94.0px;height:47.09999999999991px;display:flex;align-items:center;justify-content:flex-end;text-align:right;font-family:'Liberation Sans',sans-serif;font-weight:normal;font-size:12.2px;line-height:14px;padding-left:0px;padding-right:4.5px;color:#000;"><div>( 400.218)</div></div>
<div class="a" style="left:694.5px;top:621.7px;width:29.0px;height:47.09999999999991px;display:flex;align-items:center;justify-content:flex-end;text-align:right;font-family:'Liberation Sans',sans-serif;font-weight:normal;font-size:12.2px;line-height:14px;padding-left:0px;padding-right:4.5px;color:#000;"><div>20</div></div>
<div class="a" style="left:723.5px;top:621.7px;width:94.0px;height:47.09999999999991px;display:flex;align-items:center;justify-content:flex-end;text-align:right;font-family:'Liberation Sans',sans-serif;font-weight:normal;font-size:12.2px;line-height:14px;padding-left:0px;padding-right:4.5px;color:#000;"><div>314.770</div></div>
<div class="a" style="left:911.5px;top:621.7px;width:94.0px;height:47.09999999999991px;display:flex;align-items:center;justify-content:flex-end;text-align:right;font-family:'Liberation Sans',sans-serif;font-weight:normal;font-size:12.2px;line-height:14px;padding-left:0px;padding-right:4.5px;color:#000;"><div>314.770</div></div>
<div class="a" style="left:1005.5px;top:621.7px;width:94.0px;height:47.09999999999991px;display:flex;align-items:center;justify-content:flex-end;text-align:right;font-family:'Liberation Sans',sans-serif;font-weight:normal;font-size:12.2px;line-height:14px;padding-left:0px;padding-right:4.5px;color:#000;"><div>15</div></div>
<div class="a" style="left:1099.5px;top:621.7px;width:94.0px;height:47.09999999999991px;display:flex;align-items:center;justify-content:flex-end;text-align:right;font-family:'Liberation Sans',sans-serif;font-weight:normal;font-size:12.2px;line-height:14px;padding-left:0px;padding-right:4.5px;color:#000;"><div>300.000</div></div>
<div class="a" style="left:1193.5px;top:621.7px;width:28.5px;height:47.09999999999991px;display:flex;align-items:center;justify-content:flex-end;text-align:right;font-family:'Liberation Sans',sans-serif;font-weight:normal;font-size:12.2px;line-height:14px;padding-left:0px;padding-right:4.5px;color:#000;"><div>(32<br>)</div></div>
<div class="a" style="left:1222px;top:621.7px;width:94px;height:47.09999999999991px;display:flex;align-items:center;justify-content:flex-end;text-align:right;font-family:'Liberation Sans',sans-serif;font-weight:normal;font-size:12.2px;line-height:14px;padding-left:0px;padding-right:4.5px;color:#000;"><div>( 385.448)</div></div>
<div class="a" style="left:362.5px;top:667.8px;width:38.0px;height:47.0px;display:flex;align-items:center;justify-content:center;text-align:center;font-family:'Liberation Serif',serif;font-weight:normal;font-size:11.3px;line-height:14px;padding-left:0px;padding-right:0px;color:#000;"><div>18/02</div></div>
<div class="a" style="left:400.5px;top:668.3px;width:27.0px;height:47.0px;display:flex;align-items:center;justify-content:center;text-align:center;font-family:'Liberation Serif',serif;font-weight:normal;font-size:12px;line-height:14px;padding-left:0px;padding-right:0px;color:#000;"><div>2</div></div>
<div class="a" style="left:427.5px;top:667.8px;width:48.0px;height:47.0px;display:flex;align-items:center;justify-content:flex-start;text-align:left;font-family:'Liberation Serif',serif;font-weight:normal;font-size:12.6px;line-height:14.6px;padding-left:4.5px;padding-right:0px;color:#000;letter-spacing:0.05px;"><div>CTTT.<br>A0013<br>6</div></div>
<div class="a" style="left:475.5px;top:667.8px;width:96.0px;height:47.0px;display:flex;align-items:center;justify-content:flex-start;text-align:left;font-family:'Liberation Serif',serif;font-weight:normal;font-size:12.6px;line-height:14.8px;padding-left:4.2px;padding-right:0px;color:#000;"><div>HS 0 đồng</div></div>
<div class="a" style="left:571.5px;top:668.8px;width:29.0px;height:47.0px;display:flex;align-items:center;justify-content:flex-end;text-align:right;font-family:'Liberation Sans',sans-serif;font-weight:normal;font-size:12.2px;line-height:14px;padding-left:0px;padding-right:4.5px;color:#000;"><div>30</div></div>
<div class="a" style="left:600.5px;top:668.8px;width:94.0px;height:47.0px;display:flex;align-items:center;justify-content:flex-end;text-align:right;font-family:'Liberation Sans',sans-serif;font-weight:normal;font-size:12.2px;line-height:14px;padding-left:0px;padding-right:4.5px;color:#000;"><div>434.770</div></div>
<div class="a" style="left:694.5px;top:668.8px;width:29.0px;height:47.0px;display:flex;align-items:center;justify-content:flex-end;text-align:right;font-family:'Liberation Sans',sans-serif;font-weight:normal;font-size:12.2px;line-height:14px;padding-left:0px;padding-right:4.5px;color:#000;"><div>11</div></div>
<div class="a" style="left:723.5px;top:668.8px;width:94.0px;height:47.0px;display:flex;align-items:center;justify-content:flex-end;text-align:right;font-family:'Liberation Sans',sans-serif;font-weight:normal;font-size:12.2px;line-height:14px;padding-left:0px;padding-right:4.5px;color:#000;"><div>134.770</div></div>
<div class="a" style="left:911.5px;top:668.8px;width:94.0px;height:47.0px;display:flex;align-items:center;justify-content:flex-end;text-align:right;font-family:'Liberation Sans',sans-serif;font-weight:normal;font-size:12.2px;line-height:14px;padding-left:0px;padding-right:4.5px;color:#000;"><div>134.770</div></div>
<div class="a" style="left:1005.5px;top:668.8px;width:94.0px;height:47.0px;display:flex;align-items:center;justify-content:flex-end;text-align:right;font-family:'Liberation Sans',sans-serif;font-weight:normal;font-size:12.2px;line-height:14px;padding-left:0px;padding-right:4.5px;color:#000;"><div>40</div></div>
<div class="a" style="left:1099.5px;top:668.8px;width:94.0px;height:47.0px;display:flex;align-items:center;justify-content:flex-end;text-align:right;font-family:'Liberation Sans',sans-serif;font-weight:normal;font-size:12.2px;line-height:14px;padding-left:0px;padding-right:4.5px;color:#000;"><div>554.540</div></div>
<div class="a" style="left:1193.5px;top:668.8px;width:28.5px;height:47.0px;display:flex;align-items:center;justify-content:flex-end;text-align:right;font-family:'Liberation Sans',sans-serif;font-weight:normal;font-size:12.2px;line-height:14px;padding-left:0px;padding-right:4.5px;color:#000;"><div>1</div></div>
<div class="a" style="left:1222px;top:668.8px;width:94px;height:47.0px;display:flex;align-items:center;justify-content:flex-end;text-align:right;font-family:'Liberation Sans',sans-serif;font-weight:normal;font-size:12.2px;line-height:14px;padding-left:0px;padding-right:4.5px;color:#000;"><div>15.000</div></div>
<div class="a" style="left:362.5px;top:714.8px;width:38.0px;height:47.0px;display:flex;align-items:center;justify-content:center;text-align:center;font-family:'Liberation Serif',serif;font-weight:normal;font-size:11.3px;line-height:14px;padding-left:0px;padding-right:0px;color:#000;"><div>18/02</div></div>
<div class="a" style="left:400.5px;top:715.3px;width:27.0px;height:47.0px;display:flex;align-items:center;justify-content:center;text-align:center;font-family:'Liberation Serif',serif;font-weight:normal;font-size:12px;line-height:14px;padding-left:0px;padding-right:0px;color:#000;"><div>3</div></div>
<div class="a" style="left:427.5px;top:714.8px;width:48.0px;height:47.0px;display:flex;align-items:center;justify-content:flex-start;text-align:left;font-family:'Liberation Serif',serif;font-weight:normal;font-size:12.6px;line-height:14.6px;padding-left:4.5px;padding-right:0px;color:#000;letter-spacing:0.05px;"><div>CTTT.<br>A0013<br>7</div></div>
<div class="a" style="left:475.5px;top:714.8px;width:96.0px;height:47.0px;display:flex;align-items:center;justify-content:flex-start;text-align:left;font-family:'Liberation Serif',serif;font-weight:normal;font-size:12.6px;line-height:14.8px;padding-left:4.2px;padding-right:0px;color:#000;"><div>Nguyễn Thùy<br>Dung</div></div>
<div class="a" style="left:571.5px;top:715.8px;width:29.0px;height:47.0px;display:flex;align-items:center;justify-content:flex-end;text-align:right;font-family:'Liberation Sans',sans-serif;font-weight:normal;font-size:12.2px;line-height:14px;padding-left:0px;padding-right:4.5px;color:#000;"><div>7</div></div>
<div class="a" style="left:600.5px;top:715.8px;width:94.0px;height:47.0px;display:flex;align-items:center;justify-content:flex-end;text-align:right;font-family:'Liberation Sans',sans-serif;font-weight:normal;font-size:12.2px;line-height:14px;padding-left:0px;padding-right:4.5px;color:#000;"><div>( 26.368)</div></div>
<div class="a" style="left:694.5px;top:715.8px;width:29.0px;height:47.0px;display:flex;align-items:center;justify-content:flex-end;text-align:right;font-family:'Liberation Sans',sans-serif;font-weight:normal;font-size:12.2px;line-height:14px;padding-left:0px;padding-right:4.5px;color:#000;"><div>4</div></div>
<div class="a" style="left:723.5px;top:715.8px;width:94.0px;height:47.0px;display:flex;align-items:center;justify-content:flex-end;text-align:right;font-family:'Liberation Sans',sans-serif;font-weight:normal;font-size:12.2px;line-height:14px;padding-left:0px;padding-right:4.5px;color:#000;"><div>60.000</div></div>
<div class="a" style="left:911.5px;top:715.8px;width:94.0px;height:47.0px;display:flex;align-items:center;justify-content:flex-end;text-align:right;font-family:'Liberation Sans',sans-serif;font-weight:normal;font-size:12.2px;line-height:14px;padding-left:0px;padding-right:4.5px;color:#000;"><div>60.000</div></div>
<div class="a" style="left:1005.5px;top:715.8px;width:94.0px;height:47.0px;display:flex;align-items:center;justify-content:flex-end;text-align:right;font-family:'Liberation Sans',sans-serif;font-weight:normal;font-size:12.2px;line-height:14px;padding-left:0px;padding-right:4.5px;color:#000;"><div>25</div></div>
<div class="a" style="left:1099.5px;top:715.8px;width:94.0px;height:47.0px;display:flex;align-items:center;justify-content:flex-end;text-align:right;font-family:'Liberation Sans',sans-serif;font-weight:normal;font-size:12.2px;line-height:14px;padding-left:0px;padding-right:4.5px;color:#000;"><div>254.540</div></div>
<div class="a" style="left:1193.5px;top:715.8px;width:28.5px;height:47.0px;display:flex;align-items:center;justify-content:flex-end;text-align:right;font-family:'Liberation Sans',sans-serif;font-weight:normal;font-size:12.2px;line-height:14px;padding-left:0px;padding-right:4.5px;color:#000;"><div>(14<br>)</div></div>
<div class="a" style="left:1222px;top:715.8px;width:94px;height:47.0px;display:flex;align-items:center;justify-content:flex-end;text-align:right;font-family:'Liberation Sans',sans-serif;font-weight:normal;font-size:12.2px;line-height:14px;padding-left:0px;padding-right:4.5px;color:#000;"><div>( 220.908)</div></div>
<div class="a" style="left:362.5px;top:761.8px;width:38.0px;height:46.80000000000007px;display:flex;align-items:center;justify-content:center;text-align:center;font-family:'Liberation Serif',serif;font-weight:normal;font-size:11.3px;line-height:14px;padding-left:0px;padding-right:0px;color:#000;"><div>18/02</div></div>
<div class="a" style="left:400.5px;top:762.3px;width:27.0px;height:46.80000000000007px;display:flex;align-items:center;justify-content:center;text-align:center;font-family:'Liberation Serif',serif;font-weight:normal;font-size:12px;line-height:14px;padding-left:0px;padding-right:0px;color:#000;"><div>4</div></div>
<div class="a" style="left:427.5px;top:761.8px;width:48.0px;height:46.80000000000007px;display:flex;align-items:center;justify-content:flex-start;text-align:left;font-family:'Liberation Serif',serif;font-weight:normal;font-size:12.6px;line-height:14.6px;padding-left:4.5px;padding-right:0px;color:#000;letter-spacing:0.05px;"><div>CTTT.<br>A0013<br>8</div></div>
<div class="a" style="left:475.5px;top:761.8px;width:96.0px;height:46.80000000000007px;display:flex;align-items:center;justify-content:flex-start;text-align:left;font-family:'Liberation Serif',serif;font-weight:normal;font-size:12.6px;line-height:14.8px;padding-left:4.2px;padding-right:0px;color:#000;"><div>Phạm Ngọc<br>Dung</div></div>
<div class="a" style="left:571.5px;top:762.8px;width:29.0px;height:46.80000000000007px;display:flex;align-items:center;justify-content:flex-end;text-align:right;font-family:'Liberation Sans',sans-serif;font-weight:normal;font-size:12.2px;line-height:14px;padding-left:0px;padding-right:4.5px;color:#000;"><div>(10<br>)</div></div>
<div class="a" style="left:600.5px;top:762.8px;width:94.0px;height:46.80000000000007px;display:flex;align-items:center;justify-content:flex-end;text-align:right;font-family:'Liberation Sans',sans-serif;font-weight:normal;font-size:12.2px;line-height:14px;padding-left:0px;padding-right:4.5px;color:#000;"><div>( 6.586)</div></div>
<div class="a" style="left:694.5px;top:762.8px;width:29.0px;height:46.80000000000007px;display:flex;align-items:center;justify-content:flex-end;text-align:right;font-family:'Liberation Sans',sans-serif;font-weight:normal;font-size:12.2px;line-height:14px;padding-left:0px;padding-right:4.5px;color:#000;"><div>25</div></div>
<div class="a" style="left:723.5px;top:762.8px;width:94.0px;height:46.80000000000007px;display:flex;align-items:center;justify-content:flex-end;text-align:right;font-family:'Liberation Sans',sans-serif;font-weight:normal;font-size:12.2px;line-height:14px;padding-left:0px;padding-right:4.5px;color:#000;"><div>254.540</div></div>
<div class="a" style="left:911.5px;top:762.8px;width:94.0px;height:46.80000000000007px;display:flex;align-items:center;justify-content:flex-end;text-align:right;font-family:'Liberation Sans',sans-serif;font-weight:normal;font-size:12.2px;line-height:14px;padding-left:0px;padding-right:4.5px;color:#000;"><div>254.540</div></div>
<div class="a" style="left:1005.5px;top:762.8px;width:94.0px;height:46.80000000000007px;display:flex;align-items:center;justify-content:flex-end;text-align:right;font-family:'Liberation Sans',sans-serif;font-weight:normal;font-size:12.2px;line-height:14px;padding-left:0px;padding-right:4.5px;color:#000;"><div>40</div></div>
<div class="a" style="left:1099.5px;top:762.8px;width:94.0px;height:46.80000000000007px;display:flex;align-items:center;justify-content:flex-end;text-align:right;font-family:'Liberation Sans',sans-serif;font-weight:normal;font-size:12.2px;line-height:14px;padding-left:0px;padding-right:4.5px;color:#000;"><div>554.540</div></div>
<div class="a" style="left:1193.5px;top:762.8px;width:28.5px;height:46.80000000000007px;display:flex;align-items:center;justify-content:flex-end;text-align:right;font-family:'Liberation Sans',sans-serif;font-weight:normal;font-size:12.2px;line-height:14px;padding-left:0px;padding-right:4.5px;color:#000;"><div>(25<br>)</div></div>
<div class="a" style="left:1222px;top:762.8px;width:94px;height:46.80000000000007px;display:flex;align-items:center;justify-content:flex-end;text-align:right;font-family:'Liberation Sans',sans-serif;font-weight:normal;font-size:12.2px;line-height:14px;padding-left:0px;padding-right:4.5px;color:#000;"><div>( 306.586)</div></div>
<div class="a" style="left:400.5px;top:808.6px;width:27.0px;height:31.399999999999977px;display:flex;align-items:center;justify-content:center;text-align:center;font-family:'Liberation Serif',serif;font-weight:bold;font-size:12.6px;line-height:14px;padding-left:0px;padding-right:0px;color:#000;"><div>4</div></div>
<div class="a" style="left:475.5px;top:808.6px;width:96.0px;height:31.399999999999977px;display:flex;align-items:center;justify-content:flex-start;text-align:left;font-family:'Liberation Serif',serif;font-weight:bold;font-size:12.6px;line-height:14px;padding-left:4.2px;padding-right:0px;color:#000;"><div>Cộng</div></div>
<div class="a" style="left:571.5px;top:808.6px;width:29.0px;height:31.399999999999977px;display:flex;align-items:center;justify-content:flex-end;text-align:right;font-family:'Liberation Sans',sans-serif;font-weight:bold;font-size:12.2px;line-height:14px;padding-left:0px;padding-right:3.8px;color:#000;align-items:flex-start;padding-top:2px;"><div>(10<br>)</div></div>
<div class="a" style="left:600.5px;top:808.6px;width:94.0px;height:31.399999999999977px;display:flex;align-items:center;justify-content:flex-end;text-align:right;font-family:'Liberation Sans',sans-serif;font-weight:bold;font-size:12.2px;line-height:14px;padding-left:0px;padding-right:3.8px;color:#000;"><div>1.598</div></div>
<div class="a" style="left:694.5px;top:808.6px;width:29.0px;height:31.399999999999977px;display:flex;align-items:center;justify-content:flex-end;text-align:right;font-family:'Liberation Sans',sans-serif;font-weight:bold;font-size:12.2px;line-height:14px;padding-left:0px;padding-right:3.8px;color:#000;"><div>60</div></div>
<div class="a" style="left:723.5px;top:808.6px;width:94.0px;height:31.399999999999977px;display:flex;align-items:center;justify-content:flex-end;text-align:right;font-family:'Liberation Sans',sans-serif;font-weight:bold;font-size:12.2px;line-height:14px;padding-left:0px;padding-right:3.8px;color:#000;"><div>764.080</div></div>
<div class="a" style="left:911.5px;top:808.6px;width:94.0px;height:31.399999999999977px;display:flex;align-items:center;justify-content:flex-end;text-align:right;font-family:'Liberation Sans',sans-serif;font-weight:bold;font-size:12.2px;line-height:14px;padding-left:0px;padding-right:3.8px;color:#000;"><div>764.080</div></div>
<div class="a" style="left:1005.5px;top:808.6px;width:94.0px;height:31.399999999999977px;display:flex;align-items:center;justify-content:flex-end;text-align:right;font-family:'Liberation Sans',sans-serif;font-weight:bold;font-size:12.2px;line-height:14px;padding-left:0px;padding-right:3.8px;color:#000;"><div>120</div></div>
<div class="a" style="left:1099.5px;top:808.6px;width:94.0px;height:31.399999999999977px;display:flex;align-items:center;justify-content:flex-end;text-align:right;font-family:'Liberation Sans',sans-serif;font-weight:bold;font-size:12.2px;line-height:14px;padding-left:0px;padding-right:3.8px;color:#000;"><div>1.663.620</div></div>
<div class="a" style="left:1193.5px;top:808.6px;width:28.5px;height:31.399999999999977px;display:flex;align-items:center;justify-content:flex-end;text-align:right;font-family:'Liberation Sans',sans-serif;font-weight:bold;font-size:12.2px;line-height:14px;padding-left:0px;padding-right:3.8px;color:#000;align-items:flex-start;padding-top:2px;"><div>(70<br>)</div></div>
<div class="a" style="left:1222px;top:808.6px;width:94px;height:31.399999999999977px;display:flex;align-items:center;justify-content:flex-end;text-align:right;font-family:'Liberation Sans',sans-serif;font-weight:bold;font-size:12.2px;line-height:14px;padding-left:0px;padding-right:3.8px;color:#000;"><div>( 897.942)</div></div>
<svg style="left:0;top:0" width="1530" height="842"><g stroke="#000" fill="none"><path d="M361.8 506H1410.2" stroke-width="1.9"/><path d="M361.8 620.7H1410.2" stroke-width="1.9"/><path d="M361.8 667.8H1410.2" stroke-width="1.9"/><path d="M361.8 714.8H1410.2" stroke-width="1.9"/><path d="M361.8 761.8H1410.2" stroke-width="1.9"/><path d="M361.8 808.6H1410.2" stroke-width="1.9"/><path d="M570.8 544.4H912.2" stroke-width="1.9"/><path d="M1004.8 544.4H1410.2" stroke-width="1.9"/><path d="M570.8 582.3H818.2" stroke-width="1.9"/><path d="M1192.8 582.3H1316.7" stroke-width="1.9"/><path d="M362.5 839.5H1409.5" stroke-width="1"/><path d="M362.5 840.5H1409.5" stroke="#aaa" stroke-width="1"/><path d="M362.5 505V841" stroke-width="1.35"/><path d="M400.5 505V841" stroke-width="1.35"/><path d="M427.5 505V841" stroke-width="1.35"/><path d="M475.5 505V841" stroke-width="1.35"/><path d="M571.5 505V841" stroke-width="1.35"/><path d="M817.5 505V841" stroke-width="1.35"/><path d="M911.5 505V841" stroke-width="1.35"/><path d="M1005.5 505V841" stroke-width="1.35"/><path d="M1193.5 505V841" stroke-width="1.35"/><path d="M1409.5 505V841" stroke-width="1.35"/><path d="M694.5 543.4V841" stroke-width="1.35"/><path d="M1099.5 543.4V841" stroke-width="1.35"/><path d="M1316 543.4V841" stroke-width="1.35"/><path d="M600.5 581.3V841" stroke-width="1.35"/><path d="M723.5 581.3V841" stroke-width="1.35"/><path d="M1222 581.3V841" stroke-width="1.35"/></g></svg>
</div></div>
</body></html>
